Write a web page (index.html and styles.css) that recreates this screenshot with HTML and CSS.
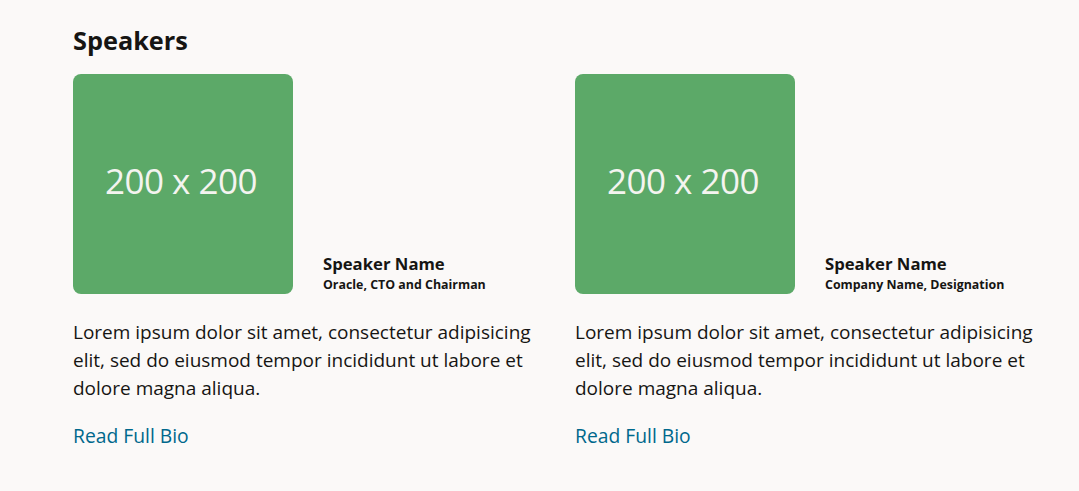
FILE: index.html
```html
<!DOCTYPE html>
<html lang="en">
<head>
<meta charset="utf-8">
<title>Speakers</title>
<link rel="stylesheet" href="styles.css">
</head>
<body>
<section class="speakers">
  <h2 class="title">Speakers</h2>
  <div class="grid">
    <article class="speaker">
      <div class="top">
        <div class="photo"><span>200 x 200</span></div>
        <div class="info">
          <div class="name">Speaker Name</div>
          <div class="role">Oracle, CTO and Chairman</div>
        </div>
      </div>
      <p class="bio">Lorem ipsum dolor sit amet, consectetur adipisicing elit, sed do eiusmod tempor incididunt ut labore et dolore magna aliqua.</p>
      <a class="more" href="#">Read Full Bio</a>
    </article>
    <article class="speaker">
      <div class="top">
        <div class="photo"><span>200 x 200</span></div>
        <div class="info">
          <div class="name">Speaker Name</div>
          <div class="role">Company Name, Designation</div>
        </div>
      </div>
      <p class="bio">Lorem ipsum dolor sit amet, consectetur adipisicing elit, sed do eiusmod tempor incididunt ut labore et dolore magna aliqua.</p>
      <a class="more" href="#">Read Full Bio</a>
    </article>
  </div>
</section>
</body>
</html>
```
FILE: styles.css
```css
html, body {
  margin: 0;
  padding: 0;
  background: #fbf9f8;
}
body {
  font-family: "Open Sans", "Noto Sans", sans-serif;
  color: #161513;
}
.speakers {
  padding: 24px 34px 0 73px;
}
.title {
  margin: 0 0 18px;
  font-size: 25.3px;
  line-height: 32px;
  font-weight: 700;
}
.grid {
  display: grid;
  grid-template-columns: 470px 470px;
  column-gap: 32px;
}
.top {
  display: flex;
  align-items: flex-end;
  gap: 30px;
}
.photo {
  width: 220px;
  height: 220px;
  border-radius: 8px;
  background: #5ca968;
  display: flex;
  align-items: center;
  justify-content: center;
  flex-shrink: 0;
  box-sizing: border-box;
  padding-bottom: 8px;
  padding-right: 4px;
}
.photo span {
  color: #f4f4f0;
  font-size: 35px;
  letter-spacing: -0.5px;
}
.name {
  font-size: 16.7px;
  font-weight: 700;
  line-height: 22px;
}
.role {
  font-size: 12.4px;
  font-weight: 700;
  line-height: 19px;
}
.bio {
  margin: 24px 0 0;
  font-size: 19px;
  line-height: 28px;
}
.more {
  display: inline-block;
  margin-top: 20px;
  font-size: 19.3px;
  line-height: 28px;
  color: #00688c;
  text-decoration: none;
}
```
